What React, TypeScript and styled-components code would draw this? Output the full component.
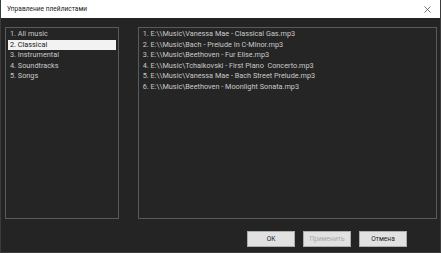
import styled, { createGlobalStyle } from "styled-components";

const GlobalStyle = createGlobalStyle`
    html, body {
        margin: 0;
        padding: 0;
        background: #242424;
    }
    * {
        box-sizing: border-box;
    }
`;

const Window = styled.div`
    width: 441px;
    height: 253px;
    display: flex;
    flex-direction: column;
    background: #242424;
    border: 1px solid #3c3c3c;
    border-top: none;
    font-family: Roboto, "Noto Sans", sans-serif;
    overflow: hidden;
`;

const TitleBar = styled.div`
    height: 18px;
    flex-shrink: 0;
    display: flex;
    align-items: center;
    justify-content: space-between;
    padding: 0 9px 0 6px;
    background: #ffffff;
    color: #1a1a1a;
    font-size: 6.6px;
`;

const CloseIcon = styled.svg`
    width: 7px;
    height: 7px;
    stroke: #555;
    stroke-width: 0.9;
`;

const Body = styled.div`
    flex: 1;
    display: flex;
    flex-direction: column;
    padding: 9px 3px 6px 4px;
`;

const Lists = styled.div`
    display: flex;
    gap: 19px;
    height: 192px;
`;

const ListBox = styled.div<{ $width: number }>`
    width: ${(p) => p.$width}px;
    height: 100%;
    border: 1px solid #5a5a5a;
    background: #252525;
    padding: 1px 2px;
    display: flex;
    flex-direction: column;
`;

const Row = styled.div<{ $selected?: boolean }>`
    height: 10.6px;
    line-height: 10.6px;
    padding-left: 2px;
    font-size: 7.3px;
    white-space: pre;
    color: ${(p) => (p.$selected ? "#1a1a1a" : "#c9c9c9")};
    background: ${(p) => (p.$selected ? "#f2f2f2" : "transparent")};
`;

const Buttons = styled.div`
    display: flex;
    justify-content: flex-end;
    gap: 8px;
    margin-top: 12px;
    padding-right: 30px;
`;

const Button = styled.div<{ $disabled?: boolean }>`
    width: 48px;
    height: 16px;
    display: flex;
    align-items: center;
    justify-content: center;
    font-size: 6.6px;
    background: #e1e1e1;
    border: 1px solid #adadad;
    color: ${(p) => (p.$disabled ? "#a8a8a8" : "#1a1a1a")};
`;

const playlists = ["1. All music", "2. Classical", "3. Instrumental", "4. Soundtracks", "5. Songs"];

const tracks = [
    "1. E:\\\\Music\\Vanessa Mae - Classical Gas.mp3",
    "2. E:\\\\Music\\Bach - Prelude In C-Minor.mp3",
    "3. E:\\\\Music\\Beethoven - Fur Elise.mp3",
    "4. E:\\\\Music\\Tchaikovski - First Piano  Concerto.mp3",
    "5. E:\\\\Music\\Vanessa Mae - Bach Street Prelude.mp3",
    "6. E:\\\\Music\\Beethoven - Moonlight Sonata.mp3",
];

const App = () => {
    return (
        <>
            <GlobalStyle />
            <Window>
                <TitleBar>
                    <span>Управление плейлистами</span>
                    <CloseIcon viewBox="0 0 8 8">
                        <path d="M0.5 0.5 L7.5 7.5 M7.5 0.5 L0.5 7.5" />
                    </CloseIcon>
                </TitleBar>
                <Body>
                    <Lists>
                        <ListBox $width={114}>
                            {playlists.map((p, i) => (
                                <Row key={p} $selected={i === 1}>{p}</Row>
                            ))}
                        </ListBox>
                        <ListBox $width={300}>
                            {tracks.map((t) => (
                                <Row key={t}>{t}</Row>
                            ))}
                        </ListBox>
                    </Lists>
                    <Buttons>
                        <Button>OK</Button>
                        <Button $disabled>Применить</Button>
                        <Button>Отмена</Button>
                    </Buttons>
                </Body>
            </Window>
        </>
    );
};

export default App;
